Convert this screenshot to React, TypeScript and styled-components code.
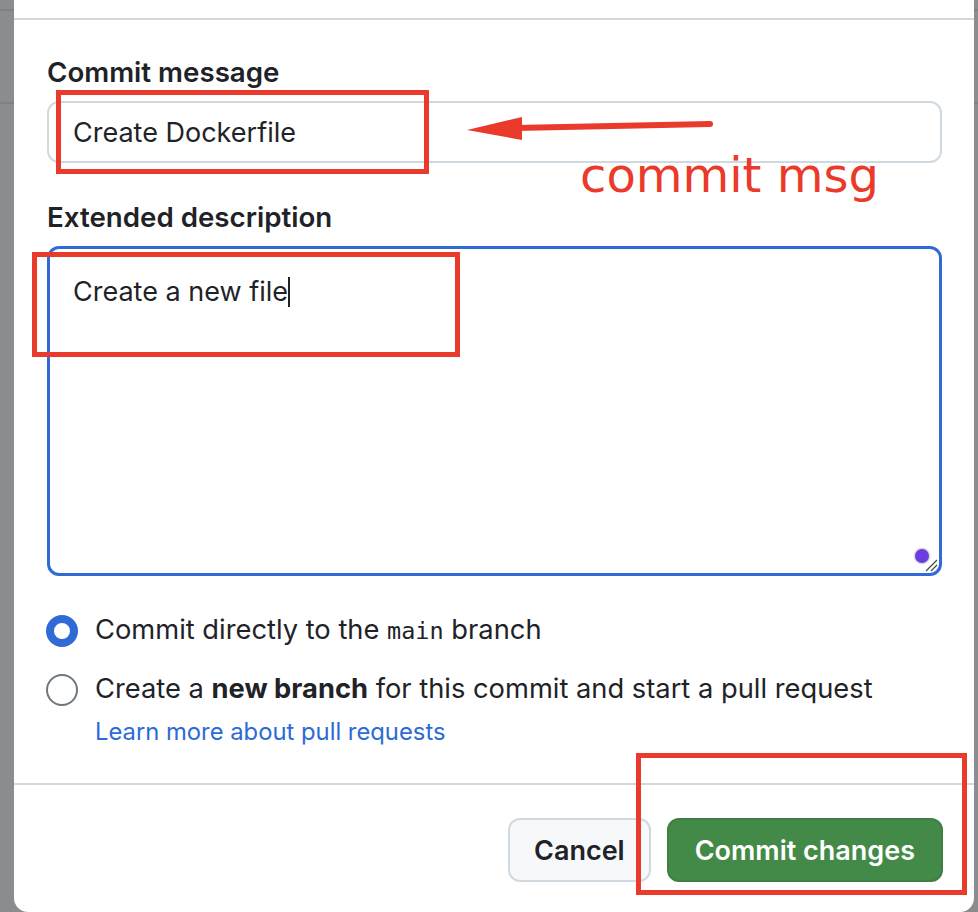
import React from "react";
import styled, { createGlobalStyle } from "styled-components";

const GlobalStyle = createGlobalStyle`
  html, body {
    margin: 0;
    padding: 0;
    background: #8b8c8e;
    overflow: hidden;
  }
  * { box-sizing: border-box; }
`;

const Page = styled.div`
  position: relative;
  width: 978px;
  height: 912px;
  display: flex;
  padding: 0 4px 0 14px;
  background-color: #8b8c8e;
  background-image: linear-gradient(#808183, #808183), linear-gradient(#808183, #808183);
  background-size: 100% 2px, 100% 2px;
  background-position: 0 9px, 0 102px;
  background-repeat: no-repeat;
  font-family: Inter, "Liberation Sans", sans-serif;
  color: #1f2328;
`;

const Dialog = styled.div`
  flex: 1;
  display: flex;
  flex-direction: column;
  background: #ffffff;
  border-radius: 0 0 14px 14px;
  overflow: hidden;
`;

const HeaderStub = styled.div`
  height: 20px;
  border-bottom: 2px solid #d1d9e0;
`;

const Body = styled.div`
  flex: 1;
  display: flex;
  flex-direction: column;
  padding: 31px 32px 0 33px;
`;

const Field = styled.div`
  display: flex;
  flex-direction: column;
  margin-bottom: 33px;
`;

const Label = styled.label`
  font-size: 27.7px;
  line-height: 42px;
  font-weight: 600;
  margin-bottom: 8px;
`;

const TextInput = styled.input`
  height: 62px;
  border: 2px solid #d1d9e0;
  border-radius: 12px;
  padding: 0 24px;
  font-family: inherit;
  font-size: 27px;
  color: #1f2328;
  background: #ffffff;
  outline: none;
`;

const TextArea = styled.div`
  position: relative;
  height: 330px;
  border: 3px solid #2f6ad6;
  border-radius: 12px;
  padding: 22px 23px 20px;
  font-size: 27px;
  line-height: 42px;
`;

const Caret = styled.span`
  display: inline-block;
  width: 2px;
  height: 30px;
  background: #1f2328;
  vertical-align: -6px;
`;

const GrammarDot = styled.span`
  position: absolute;
  right: 10px;
  bottom: 10px;
  width: 14px;
  height: 14px;
  border-radius: 50%;
  background: #6b3ce0;
  box-shadow: 0 0 0 1.5px #dcdcdc;
`;

const ResizeHandle = styled.svg`
  position: absolute;
  right: 0;
  bottom: 0;
`;

const Options = styled.div`
  display: flex;
  flex-direction: column;
  gap: 16px;
`;

const OptionRow = styled.label`
  display: flex;
  align-items: center;
  gap: 17px;
  font-size: 27.3px;
  line-height: 42px;
`;

const Radio = styled.span<{ $checked?: boolean }>`
  flex: none;
  width: 32px;
  height: 32px;
  margin: 1px 0 0 -1px;
  border-radius: 50%;
  border: ${(p) => (p.$checked ? "8px solid #2f6ad6" : "2px solid #6e7781")};
  background: #ffffff;
`;

const Code = styled.code`
  font-family: "DejaVu Sans Mono", "Liberation Mono", monospace;
  font-size: 23.5px;
`;

const Strong = styled.strong`
  font-weight: 700;
`;

const LearnMore = styled.a`
  margin: 4px 0 0 48px;
  font-size: 23.8px;
  line-height: 36px;
  color: #2c6bd6;
  text-decoration: none;
`;

const Footer = styled.div`
  border-top: 2px solid #d1d9e0;
  padding: 33px 31px 30px;
  display: flex;
  justify-content: flex-end;
  gap: 16px;
`;

const Button = styled.button<{ $primary?: boolean }>`
  height: 64px;
  padding: 0 ${(p) => (p.$primary ? 26 : 24)}px;
  border-radius: 12px;
  font-family: inherit;
  font-size: 27px;
  font-weight: 600;
  border: 2px solid ${(p) => (p.$primary ? "#3f7f43" : "#d1d9e0")};
  background: ${(p) => (p.$primary ? "#438a48" : "#f6f8fa")};
  color: ${(p) => (p.$primary ? "#ffffff" : "#1f2328")};
`;

const MarkBox = styled.div<{ $l: number; $t: number; $w: number; $h: number }>`
  position: absolute;
  left: ${(p) => p.$l}px;
  top: ${(p) => p.$t}px;
  width: ${(p) => p.$w}px;
  height: ${(p) => p.$h}px;
  border: 5px solid #e93a2b;
  pointer-events: none;
`;

const ArrowSvg = styled.svg`
  position: absolute;
  left: 0;
  top: 0;
  pointer-events: none;
`;

const Note = styled.div`
  position: absolute;
  left: 580px;
  top: 151px;
  font-family: "DejaVu Sans", sans-serif;
  font-size: 48px;
  line-height: 48px;
  color: #e93a2b;
  white-space: nowrap;
`;

export default function App() {
  return (
    <>
      <GlobalStyle />
      <Page>
        <Dialog>
          <HeaderStub />
          <Body>
            <Field>
              <Label>Commit message</Label>
              <TextInput value="Create Dockerfile" readOnly />
            </Field>
            <Field>
              <Label>Extended description</Label>
              <TextArea>
                Create a new file<Caret />
                <GrammarDot />
                <ResizeHandle width="16" height="16" viewBox="0 0 16 16">
                  <path d="M3 14 L14 3 M8 14 L14 8" stroke="#4a4a4a" strokeWidth="1.3" fill="none" />
                </ResizeHandle>
              </TextArea>
            </Field>
            <Options>
              <OptionRow>
                <Radio $checked />
                <span>
                  Commit directly to the <Code>main</Code> branch
                </span>
              </OptionRow>
              <OptionRow>
                <Radio />
                <span>
                  Create a <Strong>new branch</Strong> for this commit and start a pull request
                </span>
              </OptionRow>
            </Options>
            <LearnMore href="#">Learn more about pull requests</LearnMore>
          </Body>
          <Footer>
            <Button>Cancel</Button>
            <Button $primary>Commit changes</Button>
          </Footer>
        </Dialog>

        <MarkBox $l={56} $t={90} $w={373} $h={84} />
        <MarkBox $l={32} $t={252} $w={428} $h={105} />
        <MarkBox $l={636} $t={753} $w={331} $h={142} />
        <ArrowSvg width="978" height="912" viewBox="0 0 978 912">
          <line x1="710" y1="124" x2="515" y2="128" stroke="#e93a2b" strokeWidth="6" strokeLinecap="round" />
          <polygon points="467,130 522,117 522,140" fill="#e93a2b" />
        </ArrowSvg>
        <Note>commit msg</Note>
      </Page>
    </>
  );
}
